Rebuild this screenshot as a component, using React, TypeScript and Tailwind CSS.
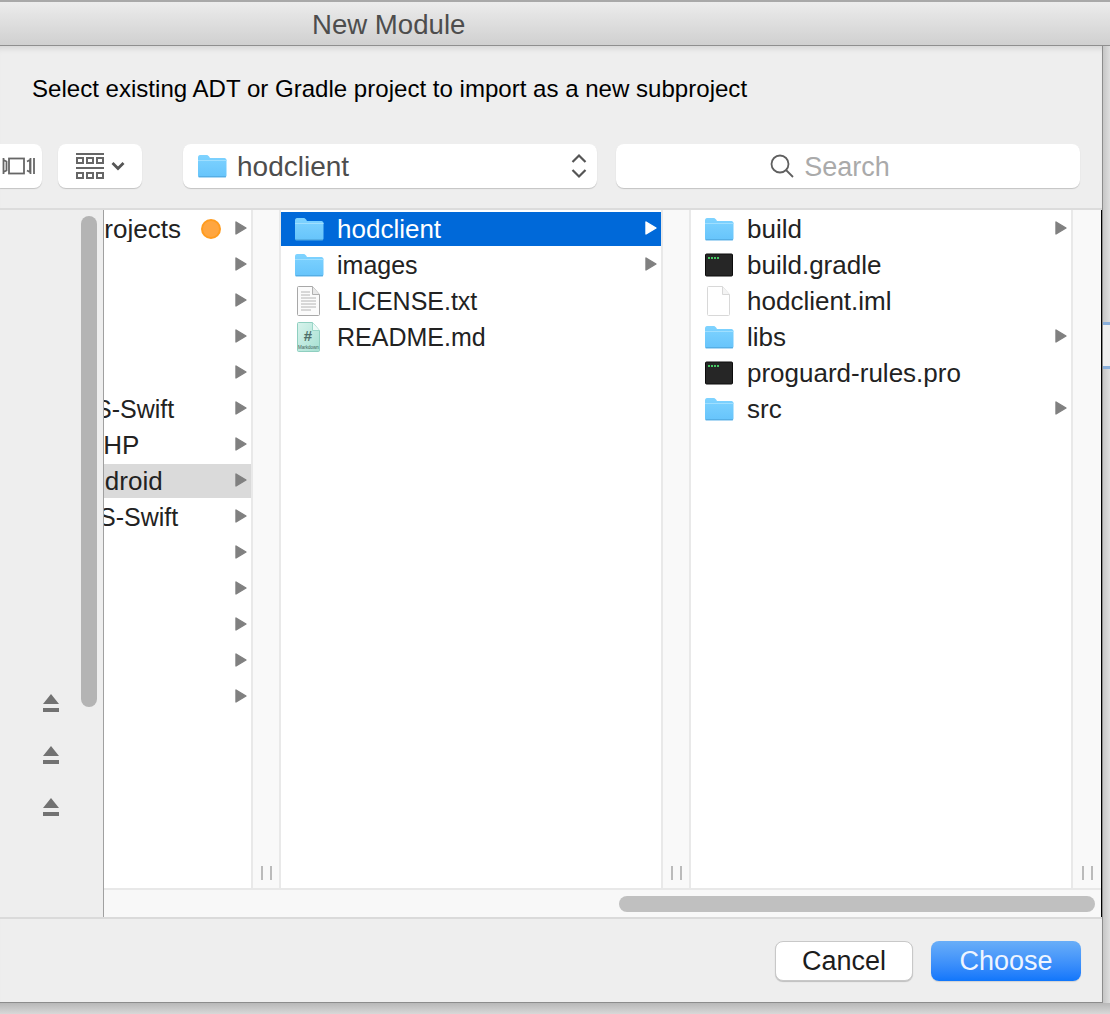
import React from "react";

const Folder = ({ className = "w-[30px] h-[24px]" }: { className?: string }) => (
  <svg viewBox="0 0 30 24" className={className}>
    <defs>
      <linearGradient id="folderFill" x1="0" y1="0" x2="0" y2="1">
        <stop offset="0" stopColor="#7fd3ff" />
        <stop offset="1" stopColor="#66c4fb" />
      </linearGradient>
    </defs>
    <path d="M1 3.5C1 2 1.8 1 3 1h6.5c1.2 0 1.8.6 2.6 1.6L13 4h14.5C28.6 4 29.5 5 29.5 6v15.5c0 1-.8 1.8-1.8 1.8H2.8c-1 0-1.8-.8-1.8-1.8z" fill="url(#folderFill)" />
    <path d="M1 6.5h28.5" stroke="#9fdfff" strokeWidth="1" />
    <path d="M1.5 22.8h27.5" stroke="#4fa6dc" strokeWidth="1" />
  </svg>
);

const Terminal = () => (
  <svg viewBox="0 0 30 24" className="w-[30px] h-[24px]">
    <rect x="1.5" y="1" width="27" height="22" rx="1" fill="#262626" stroke="#0c0c0c" />
    <path d="M4 5h2M7 5h2M10 5h2M13 5h2" stroke="#46c864" strokeWidth="1.8" />
  </svg>
);

const BlankDoc = () => (
  <svg viewBox="0 0 30 32" className="w-[30px] h-[32px]">
    <path d="M4.5 1.5h14l7 8v20c0 .6-.4 1-1 1h-20c-.6 0-1-.4-1-1v-27c0-.6.4-1 1-1z" fill="#ffffff" stroke="#d8d8d8" />
    <path d="M18.5 1.5v8h7" fill="#f4f4f4" stroke="#d8d8d8" />
  </svg>
);

const TextDoc = () => (
  <svg viewBox="0 0 30 32" className="w-[30px] h-[32px]">
    <path d="M4.5 1.5h14l7 8v20c0 .6-.4 1-1 1h-20c-.6 0-1-.4-1-1v-27c0-.6.4-1 1-1z" fill="#fbfbfb" stroke="#a8a8a8" />
    <path d="M18.5 1.5v8h7" fill="#e8e8e8" stroke="#b0b0b0" />
    <path d="M7 7h9M7 10h9M7 13h15M7 16h15M7 19h15M7 22h15M7 25h10" stroke="#b4b4b4" strokeWidth="1" />
  </svg>
);

const MarkdownDoc = () => (
  <svg viewBox="0 0 30 32" className="w-[30px] h-[32px]">
    <defs>
      <linearGradient id="mdFill" x1="0" y1="0" x2="1" y2="1">
        <stop offset="0" stopColor="#d8f3ec" />
        <stop offset="1" stopColor="#a6e0d2" />
      </linearGradient>
    </defs>
    <path d="M4.5 1.5h14l7 8v20c0 .6-.4 1-1 1h-20c-.6 0-1-.4-1-1v-27c0-.6.4-1 1-1z" fill="url(#mdFill)" stroke="#8fcfc0" />
    <path d="M18.5 1.5v8h7" fill="#eefaf7" stroke="#9ad6c8" />
    <text x="14" y="20" textAnchor="middle" fontSize="15" fontWeight="700" fontFamily="Liberation Sans" fill="#4f6f6a">#</text>
    <text x="14.5" y="28" textAnchor="middle" fontSize="4.5" fontFamily="Liberation Sans" fill="#3f5f5a">Markdown</text>
  </svg>
);

const Arrow = ({ white = false }: { white?: boolean }) => (
  <svg viewBox="0 0 12 14" className="w-[12px] h-[14px] shrink-0 mb-[2px]">
    <path
      d="M1 1 L11 7 L1 13 Z"
      fill={white ? "#ffffff" : "#808080"}
      stroke={white ? "#ffffff" : "#808080"}
      strokeWidth="1.4"
      strokeLinejoin="round"
    />
  </svg>
);

const Eject = () => (
  <svg viewBox="0 0 16 18" className="w-[16px] h-[18px]">
    <path d="M8 0 L16 10 H0 Z M0 14 H16 V18 H0 Z" fill="#727272" />
  </svg>
);

const Grip = () => (
  <div className="h-full flex items-end justify-center gap-[7px] pb-[8px]">
    <div className="w-[2px] h-[14px] bg-[#bbbbbb]" />
    <div className="w-[2px] h-[14px] bg-[#bbbbbb]" />
  </div>
);

const Strip = () => (
  <div className="w-[30px] shrink-0 border-x-2 border-[#e9e9e9] bg-[#f9f9f9]">
    <Grip />
  </div>
);

const parentRows = [
  { text: "Projects", shift: "ml-[-17px]", size: "text-[26px]", dot: true },
  { text: "" },
  { text: "" },
  { text: "" },
  { text: "" },
  { text: "S-Swift", shift: "ml-[-9px]", size: "text-[25px]" },
  { text: "PHP", shift: "ml-[-18px]", size: "text-[26px]" },
  { text: "Android", shift: "ml-[-31px]", size: "text-[26px]", active: true },
  { text: "S-Swift", shift: "ml-[-5px]", size: "text-[25px]" },
  { text: "" },
  { text: "" },
  { text: "" },
  { text: "" },
  { text: "" },
];

const projectRows = [
  { icon: <Folder />, text: "hodclient", arrow: true, selected: true },
  { icon: <Folder />, text: "images", arrow: true, size: "text-[25px]" },
  { icon: <TextDoc />, text: "LICENSE.txt", size: "text-[25px]" },
  { icon: <MarkdownDoc />, text: "README.md", size: "text-[25px]" },
];

const childRows = [
  { icon: <Folder />, text: "build", arrow: true },
  { icon: <Terminal />, text: "build.gradle" },
  { icon: <BlankDoc />, text: "hodclient.iml" },
  { icon: <Folder />, text: "libs", arrow: true },
  { icon: <Terminal />, text: "proguard-rules.pro" },
  { icon: <Folder />, text: "src", arrow: true },
];

const FileRow = ({
  icon,
  text,
  arrow,
  selected,
  size = "text-[26px]",
}: {
  icon: React.ReactNode;
  text: string;
  arrow?: boolean;
  selected?: boolean;
  size?: string;
}) => (
  <div
    className={`h-[34px] mb-[2px] flex items-center pl-[13px] pr-[4px] ${
      selected ? "bg-[#0069d9] text-white" : "text-[#222222]"
    }`}
  >
    <div className="w-[30px] flex justify-center shrink-0">{icon}</div>
    <span className={`ml-[13px] flex-1 leading-none ${size}`}>{text}</span>
    {arrow && <Arrow white={selected} />}
  </div>
);

export default function App() {
  return (
    <div className="w-[1110px] h-[1014px] overflow-hidden flex flex-col bg-[#d4d4d4] font-['Liberation_Sans',Arial,sans-serif]">
      <div className="h-[2px] bg-[#a8a8a8]" />
      <div className="h-[44px] shrink-0 flex items-center pl-[312px] pt-[2px] border-b border-[#8f8f8f] bg-gradient-to-b from-[#ececec] to-[#d0d0d0]">
        <span className="text-[27.6px] leading-none text-[#4d4d4d]">New Module</span>
      </div>

      <div className="flex">
        <div className="w-[1103px] h-[957px] shrink-0 flex flex-col border-r border-b border-[#8c8c8c] bg-[#eeeeee] shadow-[inset_0_7px_6px_-5px_rgba(0,0,0,0.12)]">
          <div className="h-[84px] shrink-0 flex items-center pl-[32px] pt-[2px] text-[24.07px] leading-none text-black">
            Select existing ADT or Gradle project to import as a new subproject
          </div>

          <div className="h-[44px] mt-[14px] mb-[20px] shrink-0 flex">
            <div className="w-[42px] rounded-r-lg bg-white shadow-[0_1px_1px_rgba(0,0,0,0.18)] flex items-center">
              <svg viewBox="0 0 36 20" className="w-[36px] h-[20px] text-[#666666]" fill="none" stroke="currentColor" strokeWidth="1.8">
                <path d="M3.5 2v16M3.5 4l3 1.5v9l-3 1.5" />
                <rect x="9" y="2.5" width="15" height="15" />
                <path d="M27 5.5l3-1.5v12l-3-1.5M30.500 2v16M34 2v16" />
              </svg>
            </div>
            <div className="w-[84px] ml-[16px] rounded-lg bg-white shadow-[0_1px_1px_rgba(0,0,0,0.18)] flex items-center pl-[18px] gap-[7px]">
              <svg viewBox="0 0 28 26" className="w-[28px] h-[26px] text-[#666666]" fill="none" stroke="currentColor" strokeWidth="2">
                <path d="M0 1h28" strokeWidth="2" />
                <rect x="1" y="5" width="6" height="5" />
                <rect x="11" y="5" width="6" height="5" />
                <rect x="21" y="5" width="6" height="5" />
                <path d="M0 15h28" strokeWidth="2" />
                <rect x="1" y="20" width="6" height="5" />
                <rect x="11" y="20" width="6" height="5" />
                <rect x="21" y="20" width="6" height="5" />
              </svg>
              <svg viewBox="0 0 14 10" className="w-[14px] h-[10px] text-[#555555]" fill="none" stroke="currentColor" strokeWidth="2.8">
                <path d="M1.5 2l5.500 5.500L12.500 2" />
              </svg>
            </div>
            <div className="w-[414px] ml-[41px] rounded-lg bg-white shadow-[0_1px_1px_rgba(0,0,0,0.18)] flex items-center pl-[14px] pr-[10px]">
              <Folder className="w-[30px] h-[24px]" />
              <span className="ml-[10px] flex-1 pt-[2px] text-[28px] leading-none text-[#4d4d4d]">hodclient</span>
              <svg viewBox="0 0 16 26" className="w-[16px] h-[26px] text-[#555555]" fill="none" stroke="currentColor" strokeWidth="2.2">
                <path d="M1.500 9L8 2.500 14.500 9M1.500 17L8 23.500 14.500 17" />
              </svg>
            </div>
            <div className="w-[464px] ml-[19px] rounded-lg bg-white shadow-[0_1px_1px_rgba(0,0,0,0.18)] flex items-center justify-center pr-[36px] gap-[10px]">
              <svg viewBox="0 0 24 24" className="w-[24px] h-[24px] text-[#5f5f5f]" fill="none" stroke="currentColor" strokeWidth="1.8">
                <circle cx="10" cy="10" r="8.500" />
                <path d="M16 16l7 7" />
              </svg>
              <span className="pt-[2px] text-[27px] leading-none text-[#aaaaaa]">Search</span>
            </div>
          </div>

          <div className="h-[711px] shrink-0 flex border-t-2 border-b-2 border-t-[#dcdcdc] border-b-[#dadada]">
            <div className="w-[104px] shrink-0 flex border-r border-[#a0a0a0] bg-[#eeeeee]">
              <div className="w-[81px] flex flex-col items-center gap-[34px] pt-[484px] pl-[21px]">
                <Eject />
                <Eject />
                <Eject />
              </div>
              <div className="w-[16px] h-[491px] mt-[6px] rounded-full bg-[#b4b4b4]" />
            </div>

            <div className="flex-1 min-w-0 flex flex-col border-r border-black">
              <div className="h-[678px] flex">
                <div className="w-[147px] shrink-0 overflow-hidden bg-white pt-[2px]">
                  {parentRows.map((row, i) => (
                    <div
                      key={i}
                      className={`h-[34px] mb-[2px] flex items-center pr-[4px] ${row.active ? "bg-[#dadada]" : ""}`}
                    >
                      <div className="flex-1 min-w-0 overflow-hidden">
                        <span className={`block whitespace-nowrap leading-none text-[#222222] ${row.size ?? ""} ${row.shift ?? ""}`}>
                          {row.text}
                        </span>
                      </div>
                      {row.dot && (
                        <div className="w-[20px] h-[20px] mr-[14px] rounded-full bg-[#ffa640] border-2 border-[#ff9c1f]" />
                      )}
                      <Arrow />
                    </div>
                  ))}
                </div>
                <Strip />
                <div className="w-[380px] shrink-0 bg-white pt-[2px]">
                  {projectRows.map((row) => (
                    <FileRow key={row.text} {...row} />
                  ))}
                </div>
                <Strip />
                <div className="w-[380px] shrink-0 bg-white pt-[2px]">
                  {childRows.map((row) => (
                    <FileRow key={row.text} {...row} />
                  ))}
                </div>
                <div className="flex-1 border-l-2 border-[#e9e9e9] bg-[#f9f9f9]">
                  <Grip />
                </div>
              </div>
              <div className="flex-1 flex justify-end items-center pr-[6px] border-t-2 border-t-[#e8e8e8] bg-[#f8f8f8]">
                <div className="w-[476px] h-[16px] rounded-full bg-[#c0c0c0]" />
              </div>
            </div>
          </div>

          <div className="flex-1 flex justify-end items-start gap-[18px] pt-[22px] pr-[21px]">
            <button className="w-[138px] h-[40px] rounded-lg bg-white border border-[#c8c8c8] shadow-[0_1px_1px_rgba(0,0,0,0.2)] text-[27px] leading-none text-[#1c1c1c]">
              Cancel
            </button>
            <button className="w-[150px] h-[40px] rounded-lg bg-gradient-to-b from-[#69aef8] to-[#0f76fb] shadow-[0_1px_1px_rgba(0,0,0,0.12)] text-[27px] leading-none text-[#eef5ff]">
              Choose
            </button>
          </div>
        </div>

        <div className="flex-1 flex flex-col bg-gradient-to-r from-[#c6c6c6] to-[#dedede]">
          <div className="h-[276px]" />
          <div className="h-[3px] bg-[#8ab0dc]" />
          <div className="h-[41px] bg-[#efefef]" />
          <div className="h-[3px] bg-[#8ab0dc]" />
        </div>
      </div>

      <div className="flex-1 bg-gradient-to-b from-[#b8b8b8] to-[#d8d8d8]" />
    </div>
  );
}
